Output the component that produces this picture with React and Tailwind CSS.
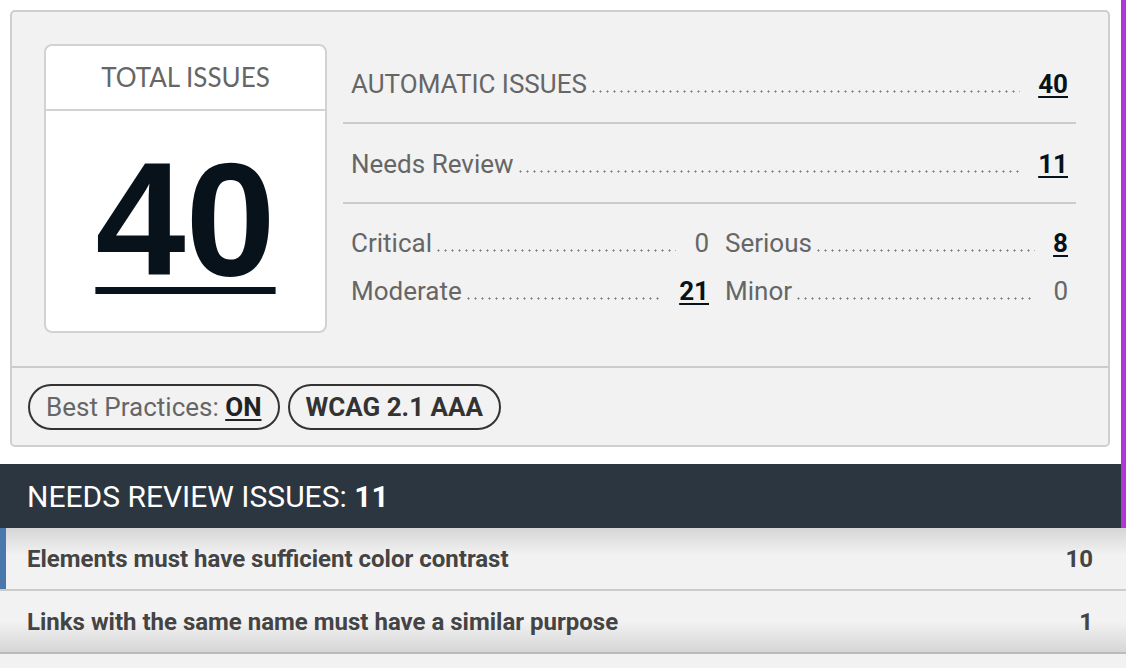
import React from "react";

function Leader({ label, value, strong, className = "" }) {
  return (
    <div className={`flex items-baseline min-w-0 ${className}`}>
      <span className="shrink-0 whitespace-nowrap">{label}</span>
      <span className="flex-1 min-w-0 h-[3px] ml-[3px] bg-[radial-gradient(circle,#777_0.8px,transparent_1.3px)] bg-[length:7px_3px] bg-repeat-x bg-left-bottom" />
      <span className="shrink-0 pl-[18px]">
        {strong ? (
          <span className="font-bold text-[#08121a] underline decoration-[2px] underline-offset-[3px]">{value}</span>
        ) : (
          <span>{value}</span>
        )}
      </span>
    </div>
  );
}

export default function App() {
  return (
    <div className="w-[1126px] h-[668px] bg-white overflow-hidden flex flex-col font-['Roboto',sans-serif]">
      <div className="flex shrink-0">
        <div className="flex-1 min-w-0 flex flex-col">
          <div className="pt-[10px] pl-[10px] pr-[11px]">
            <div className="border-2 border-[#cfcfcf] rounded-[5px] bg-[#f2f2f2]">
              <div className="flex gap-4 pt-8 px-8 pb-[33px]">
                <div className="w-[283px] h-[289px] shrink-0 border-2 border-[#d2d2d2] rounded-[8px] bg-white flex flex-col">
                  <div className="h-[65px] border-b-2 border-[#d2d2d2] flex items-center justify-center font-['Lato',sans-serif] text-[26px] text-[#666]">
                    TOTAL ISSUES
                  </div>
                  <div className="flex-1 flex justify-center pt-[27px]">
                    <span className="font-['Liberation_Sans',Arial,sans-serif] font-bold text-[162px] leading-[162px] text-[#08121a] underline decoration-[7px] underline-offset-[12px]">
                      40
                    </span>
                  </div>
                </div>
                <div className="flex-1 min-w-0 flex flex-col text-[26px] text-[#666]">
                  <div className="h-[80px] border-b-2 border-[#cccccc] flex items-center px-2 pt-[2px]">
                    <Leader className="flex-1" label="AUTOMATIC ISSUES" value="40" strong />
                  </div>
                  <div className="h-[80px] border-b-2 border-[#cccccc] flex items-center px-2 pt-[2px]">
                    <Leader className="flex-1" label="Needs Review" value="11" strong />
                  </div>
                  <div className="pt-[15px] flex flex-col">
                    <div className="h-[48px] flex items-center">
                      <div className="w-[366px] pl-2">
                        <Leader label="Critical" value="0" />
                      </div>
                      <div className="flex-1 min-w-0 pl-4 pr-2">
                        <Leader label="Serious" value="8" strong />
                      </div>
                    </div>
                    <div className="h-[48px] flex items-center">
                      <div className="w-[366px] pl-2">
                        <Leader label="Moderate" value="21" strong />
                      </div>
                      <div className="flex-1 min-w-0 pl-4 pr-2">
                        <Leader label="Minor" value="0" />
                      </div>
                    </div>
                  </div>
                </div>
              </div>
              <div className="border-t-2 border-[#cccccc] pt-4 pb-[15px] px-4 flex gap-2">
                <div className="h-[46px] rounded-full border-2 border-[#333] px-4 flex items-center text-[26px] text-[#666]">
                  Best Practices:&nbsp;
                  <span className="font-bold text-[#222] underline decoration-[2px] underline-offset-[3px]">ON</span>
                </div>
                <div className="h-[46px] rounded-full border-2 border-[#333] px-4 flex items-center text-[26px] font-bold text-[#333]">
                  WCAG 2.1 AAA
                </div>
              </div>
            </div>
          </div>
          <div className="mt-[17px] h-[64px] bg-[#2c3640] flex items-center pl-[27px] text-white text-[30px]">
            NEEDS REVIEW ISSUES:&nbsp;<span className="font-bold">11</span>
          </div>
        </div>
        <div className="w-[5px] shrink-0 bg-[#b136d6]" />
      </div>
      <div className="h-[61px] shrink-0 flex items-center justify-between pl-[27px] pr-[33px] border-l-[6px] border-[#4a78ad] bg-[linear-gradient(to_bottom,#d6d6d6,#f2f2f2_45%)] text-[24px] font-bold text-[#444]">
        <span className="-ml-[6px]">Elements must have sufficient color contrast</span>
        <span>10</span>
      </div>
      <div className="h-[2px] shrink-0 bg-[#cccccc]" />
      <div className="h-[61px] shrink-0 flex items-center justify-between pl-[27px] pr-[33px] bg-[linear-gradient(to_bottom,#f2f2f2_50%,#d6d6d6)] text-[24px] font-bold text-[#444]">
        <span>Links with the same name must have a similar purpose</span>
        <span>1</span>
      </div>
      <div className="h-[2px] shrink-0 bg-[#bbbbbb]" />
      <div className="flex-1 bg-[#f2f2f2]" />
    </div>
  );
}
